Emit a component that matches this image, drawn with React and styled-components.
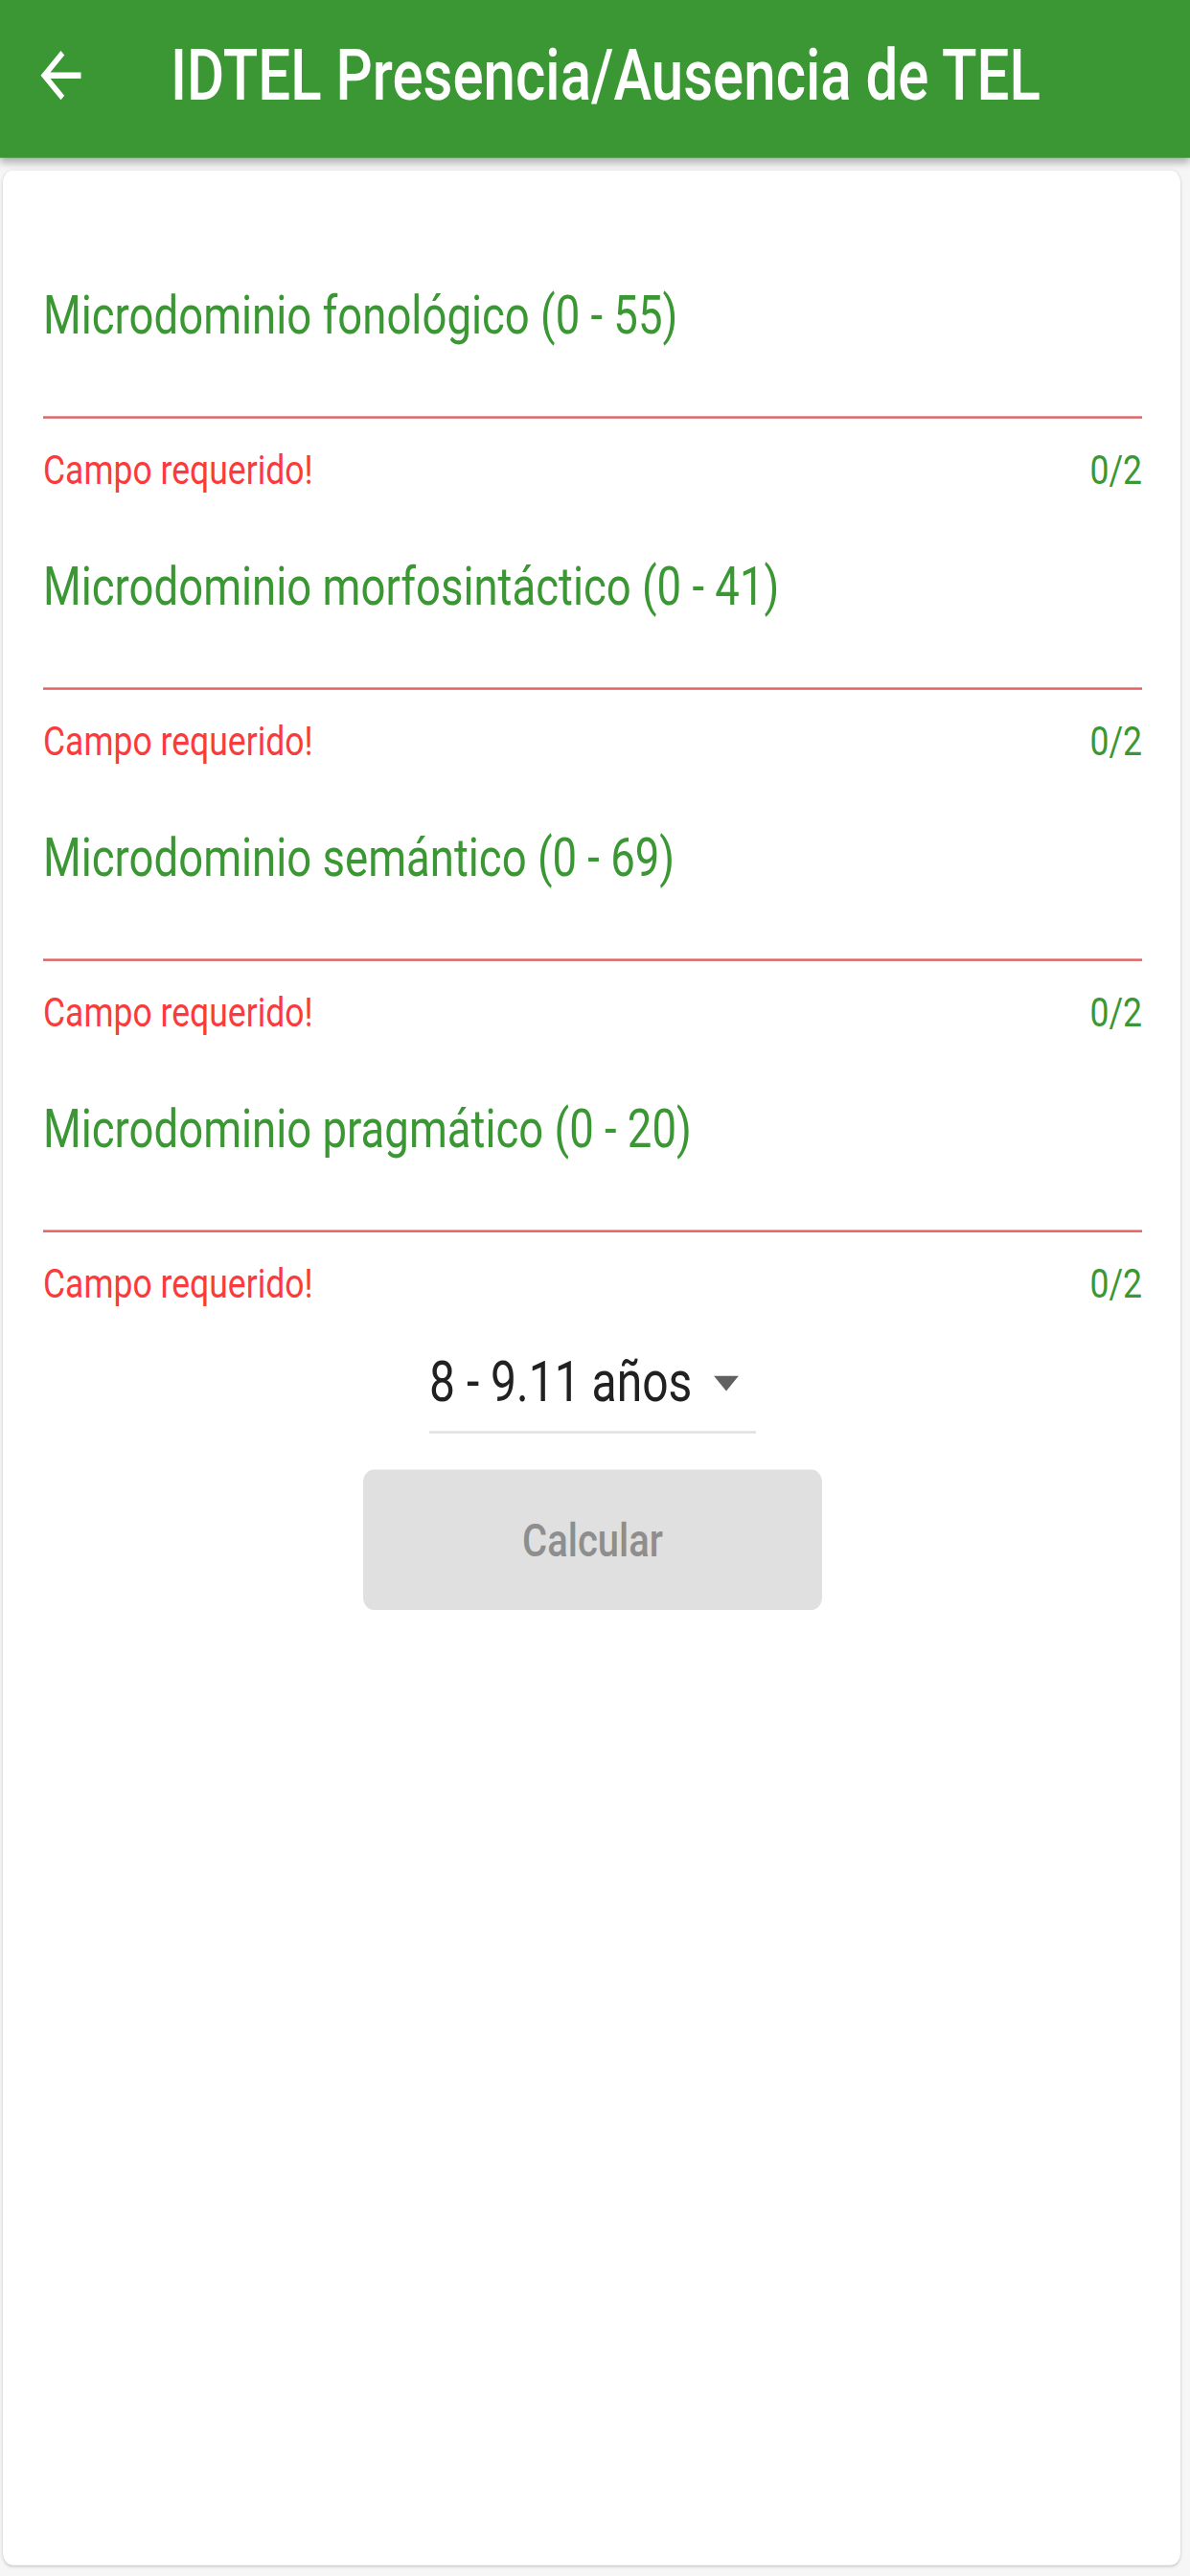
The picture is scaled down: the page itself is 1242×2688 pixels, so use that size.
import React from "react";
import styled, { createGlobalStyle } from "styled-components";

// the reference is a phone capture stretched taller than wide,
// so the screen is laid out flat and stretched once as a whole
const STRETCH = 1.22;

const colors = {
  green: "#3a9733",
  red: "#fb3b3b",
  underlineRed: "#e06262",
  page: "#f6f6f6",
  grey: "#e0e0e0",
  dark: "#212121",
};

const GlobalStyle = createGlobalStyle`
  html, body {
    margin: 0;
    padding: 0;
    background: ${colors.page};
  }
  body {
    font-family: Roboto, "Noto Sans", "Liberation Sans", sans-serif;
  }
`;

const FrameSC = styled.div`
  width: 1242px;
  height: 2688px;
  overflow: hidden;
`;

const ScreenSC = styled.div`
  width: 1242px;
  height: ${2688 / STRETCH}px;
  display: flex;
  flex-direction: column;
  background: ${colors.page};
  transform: scaleY(${STRETCH});
  transform-origin: top left;
`;

const AppBarSC = styled.header`
  position: relative;
  z-index: 1;
  box-sizing: border-box;
  height: 135px;
  flex-shrink: 0;
  display: flex;
  align-items: center;
  gap: 83px;
  padding: 0 0 6px 32px;
  background: ${colors.green};
  box-shadow: 0 4px 7px rgba(0, 0, 0, 0.28);
`;

const TitleSC = styled.h1`
  margin: 0;
  font-size: 60px;
  line-height: 68px;
  font-weight: 500;
  color: #fff;
  white-space: nowrap;
`;

const CardSC = styled.main`
  flex: 1;
  margin: 11px 10px 9px 3px;
  padding: 97px 40px 0 42px;
  background: #fff;
  border-radius: 10px;
  box-shadow: 0 1px 3px rgba(0, 0, 0, 0.22);
  display: flex;
  flex-direction: column;
`;

const FieldListSC = styled.div`
  display: flex;
  flex-direction: column;
  gap: 53px;
`;

const InputAreaSC = styled.div`
  box-sizing: border-box;
  height: 115px;
  border-bottom: 2px solid ${colors.underlineRed};
`;

const LabelSC = styled.div`
  font-size: 45.5px;
  line-height: 54px;
  color: ${colors.green};
`;

const HelperRowSC = styled.div`
  margin-top: 24px;
  display: flex;
  justify-content: space-between;
  font-size: 35.5px;
  line-height: 40px;
`;

const HelperTextSC = styled.span`
  color: ${(p) => (p.error ? colors.red : colors.green)};
`;

const DropdownSC = styled.div`
  align-self: center;
  margin-top: 33px;
  width: 341px;
  height: 62px;
  padding-bottom: 11px;
  border-bottom: 2px solid ${colors.grey};
  display: flex;
  align-items: center;
  justify-content: space-between;
  font-size: 48px;
  line-height: 56px;
  color: ${colors.dark};
`;

const ButtonSC = styled.button`
  align-self: center;
  margin-top: 31px;
  width: 479px;
  height: 120px;
  border: none;
  border-radius: 11px;
  background: ${colors.grey};
  color: #8e8e8e;
  font-family: Roboto, "Noto Sans", sans-serif;
  font-size: 40px;
  font-weight: 500;
`;

const fields = [
  "Microdominio fonológico (0 - 55)",
  "Microdominio morfosintáctico (0 - 41)",
  "Microdominio semántico (0 - 69)",
  "Microdominio pragmático (0 - 20)",
];

const BackArrow = () => (
  <svg width="63" height="63" viewBox="0 0 24 24" fill="#fff">
    <path d="M20 11H7.83l5.59-5.59L12 4l-8 8 8 8 1.41-1.41L7.83 13H20v-2z" />
  </svg>
);

const DropArrow = () => (
  <svg width="62" height="62" viewBox="0 0 24 24" fill="#616161">
    <path d="M7 10l5 5 5-5z" />
  </svg>
);

const Field = ({ label }) => (
  <div>
    <InputAreaSC>
      <LabelSC>{label}</LabelSC>
    </InputAreaSC>
    <HelperRowSC>
      <HelperTextSC error>Campo requerido!</HelperTextSC>
      <HelperTextSC>0/2</HelperTextSC>
    </HelperRowSC>
  </div>
);

export default function App() {
  return (
    <FrameSC>
      <GlobalStyle />
      <ScreenSC>
        <AppBarSC>
          <BackArrow />
          <TitleSC>IDTEL Presencia/Ausencia de TEL</TitleSC>
        </AppBarSC>
        <CardSC>
          <FieldListSC>
            {fields.map((f) => (
              <Field key={f} label={f} />
            ))}
          </FieldListSC>
          <DropdownSC>
            <span>8 - 9.11 años</span>
            <DropArrow />
          </DropdownSC>
          <ButtonSC disabled>Calcular</ButtonSC>
        </CardSC>
      </ScreenSC>
    </FrameSC>
  );
}
